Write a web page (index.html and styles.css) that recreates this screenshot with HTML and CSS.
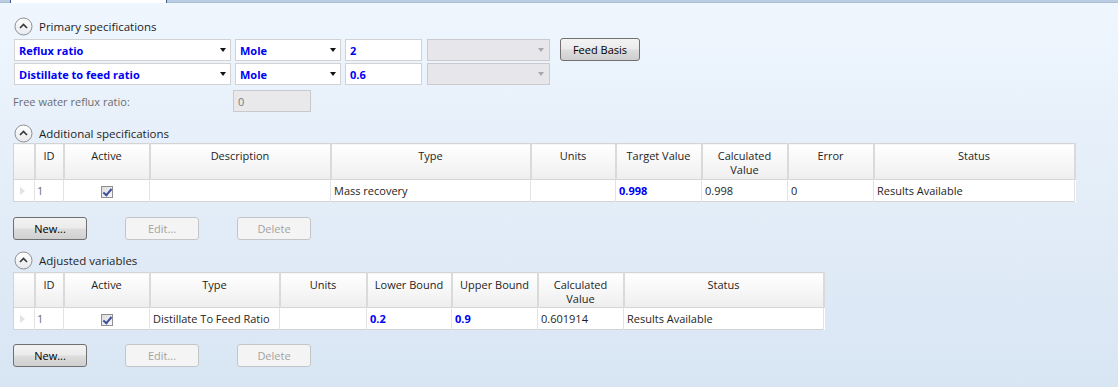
FILE: index.html
```html
<!DOCTYPE html>
<html>
<head>
    <title>Column Specifications</title>
    <link rel="stylesheet" href="styles.css">
</head>
<body>
    <div class="tabstrip"><div class="tab"></div></div>

    <div class="page">
        <div class="section-head head-primary">
            <svg class="collapse" width="19" height="19" viewBox="0 0 19 19">
                <defs>
                    <linearGradient id="cg" x1="0" y1="0" x2="0" y2="1">
                        <stop offset="0" stop-color="#ffffff"/>
                        <stop offset="1" stop-color="#e6e9ee"/>
                    </linearGradient>
                </defs>
                <circle cx="9.5" cy="9.5" r="8.5" fill="url(#cg)" stroke="#8e8e8e"/>
                <path d="M6 11 L9.5 7.5 L13 11" fill="none" stroke="#3a3a3a" stroke-width="1.7"/>
            </svg>
            <span>Primary specifications</span>
        </div>

        <div class="spec-row">
            <div class="combo combo-spec bold-blue">Reflux ratio<i class="arrow"></i></div>
            <div class="combo combo-basis bold-blue">Mole<i class="arrow"></i></div>
            <div class="field bold-blue">2</div>
            <div class="combo combo-off"><i class="arrow arrow-off"></i></div>
            <button class="btn btn-feed">Feed Basis</button>
        </div>
        <div class="spec-row">
            <div class="combo combo-spec bold-blue">Distillate to feed ratio<i class="arrow"></i></div>
            <div class="combo combo-basis bold-blue">Mole<i class="arrow"></i></div>
            <div class="field bold-blue">0.6</div>
            <div class="combo combo-off"><i class="arrow arrow-off"></i></div>
        </div>

        <div class="water-row">
            <span class="label-off">Free water reflux ratio:</span>
            <div class="field field-off">0</div>
        </div>

        <div class="section-head head-add">
            <svg class="collapse" width="19" height="19" viewBox="0 0 19 19">
                <circle cx="9.5" cy="9.5" r="8.5" fill="url(#cg)" stroke="#8e8e8e"/>
                <path d="M6 11 L9.5 7.5 L13 11" fill="none" stroke="#3a3a3a" stroke-width="1.7"/>
            </svg>
            <span>Additional specifications</span>
        </div>

        <table class="grid grid-add">
            <colgroup>
                <col class="c-rh"><col class="c-id"><col class="c-86">
                <col class="c-desc"><col class="c-type1"><col class="c-85">
                <col class="c-86"><col class="c-86"><col class="c-86"><col class="c-status1">
            </colgroup>
            <thead>
                <tr class="h36">
                    <th></th><th>ID</th><th>Active</th><th>Description</th><th>Type</th>
                    <th>Units</th><th>Target Value</th><th>Calculated Value</th><th>Error</th><th>Status</th>
                </tr>
            </thead>
            <tbody>
                <tr>
                    <td class="rh"><i class="row-mark"></i></td>
                    <td class="id">1</td>
                    <td class="center"><span class="check"></span></td>
                    <td></td>
                    <td>Mass recovery</td>
                    <td></td>
                    <td class="bold-blue">0.998</td>
                    <td>0.998</td>
                    <td>0</td>
                    <td>Results Available</td>
                </tr>
            </tbody>
        </table>

        <div class="btn-row">
            <button class="btn">New...</button>
            <button class="btn" disabled>Edit...</button>
            <button class="btn" disabled>Delete</button>
        </div>

        <div class="section-head head-adj">
            <svg class="collapse" width="19" height="19" viewBox="0 0 19 19">
                <circle cx="9.5" cy="9.5" r="8.5" fill="url(#cg)" stroke="#8e8e8e"/>
                <path d="M6 11 L9.5 7.5 L13 11" fill="none" stroke="#3a3a3a" stroke-width="1.7"/>
            </svg>
            <span>Adjusted variables</span>
        </div>

        <table class="grid grid-adj">
            <colgroup>
                <col class="c-rh"><col class="c-id"><col class="c-86">
                <col class="c-type2"><col class="c-87"><col class="c-85">
                <col class="c-86"><col class="c-86"><col class="c-status2">
            </colgroup>
            <thead>
                <tr class="h35">
                    <th></th><th>ID</th><th>Active</th><th>Type</th><th>Units</th>
                    <th>Lower Bound</th><th>Upper Bound</th><th>Calculated Value</th><th>Status</th>
                </tr>
            </thead>
            <tbody>
                <tr>
                    <td class="rh"><i class="row-mark"></i></td>
                    <td class="id">1</td>
                    <td class="center"><span class="check"></span></td>
                    <td>Distillate To Feed Ratio</td>
                    <td></td>
                    <td class="bold-blue">0.2</td>
                    <td class="bold-blue">0.9</td>
                    <td>0.601914</td>
                    <td>Results Available</td>
                </tr>
            </tbody>
        </table>

        <div class="btn-row btn-row-last">
            <button class="btn">New...</button>
            <button class="btn" disabled>Edit...</button>
            <button class="btn" disabled>Delete</button>
        </div>
    </div>
</body>
</html>
```

FILE: styles.css
```css
html, body {
    margin: 0;
    height: 100%;
}
body {
    font-family: "Open Sans", "Noto Sans", sans-serif;
    font-size: 11px;
    color: #1e1e1e;
    background: linear-gradient(#eff6fe, #d8e5f3);
    overflow: hidden;
}
.tabstrip {
    height: 2px;
    background: #bccde3;
    border-bottom: 1px solid #a9bdd7;
}
.tab {
    margin-left: 10px;
    width: 155px;
    height: 3px;
    background: #ffffff;
    border-left: 1px solid #3b5b8c;
    border-right: 1px solid #3b5b8c;
}
.page {
    padding-left: 13px;
}
.section-head {
    display: flex;
    align-items: center;
    gap: 6px;
    height: 19px;
    padding-left: 1px;
    font-size: 11.5px;
}
.head-primary { margin-top: 14px; }
.head-add { margin-top: 12px; }
.head-adj { margin-top: 11px; }
.collapse { flex: none; }

.bold-blue {
    color: #0000f5;
    font-weight: bold;
}

.spec-row {
    display: flex;
    align-items: center;
    margin-top: 3px;
    padding-left: 1px;
}
.spec-row + .spec-row { margin-top: 2px; }
.combo, .field {
    box-sizing: border-box;
    height: 22px;
    border: 1px solid #d2d2d2;
    background: #ffffff;
    display: flex;
    align-items: center;
    padding-left: 4px;
    margin-right: 4px;
    position: relative;
}
.combo-spec { width: 217px; }
.combo-basis { width: 106px; }
.field { width: 77px; margin-right: 5px; }
.combo-off {
    width: 123px;
    background: #e7e7eb;
    border-color: #cbcbcf;
    margin-right: 10px;
}
.arrow {
    position: absolute;
    right: 4px;
    top: 8px;
    width: 0;
    height: 0;
    border-left: 3.5px solid transparent;
    border-right: 3.5px solid transparent;
    border-top: 4px solid #111111;
}
.arrow-off { border-top-color: #a9a9ad; right: 5px; }

.btn {
    box-sizing: border-box;
    width: 74px;
    height: 23px;
    font-family: inherit;
    font-size: 11px;
    color: #000000;
    border: 1px solid #707070;
    border-radius: 3px;
    background: linear-gradient(#f3f3f3 0%, #ebebeb 48%, #dddddd 52%, #cfcfcf 100%);
    padding: 0;
}
.btn:disabled {
    color: #a3a3a3;
    border-color: #c3c6c9;
    background: #f4f4f4;
}
.btn-feed {
    width: 80px;
    margin-top: -1px;
}

.water-row {
    display: flex;
    align-items: center;
    margin-top: 5px;
}
.label-off {
    color: #6d6d6d;
    width: 220px;
}
.field-off {
    width: 78px;
    background: #e9e9ec;
    border-color: #c9c9cc;
    color: #7a7a7a;
}

.grid {
    border-collapse: collapse;
    table-layout: fixed;
    background: #ffffff;
    border: 1px solid #d3d3d3;
}
.grid-add { width: 1061px; }
.grid-adj { width: 810px; margin-top: 2px; }
.c-rh { width: 21px; }
.c-id { width: 29px; }
.c-85 { width: 85px; }
.c-86 { width: 86px; }
.c-87 { width: 87px; }
.c-desc { width: 181px; }
.c-type1 { width: 200px; }
.c-status1 { width: 201px; }
.c-type2 { width: 130px; }
.c-status2 { width: 200px; }

.grid th {
    font-weight: normal;
    vertical-align: top;
    text-align: center;
    line-height: 14px;
    padding: 5px 2px 0;
    background: linear-gradient(#ffffff, #f5f5f5 60%, #eeeeee);
    border-right: 2px solid #dadada;
    border-bottom: 1px solid #d5d5d5;
}
.grid .h36 { height: 36px; }
.grid .h35 { height: 35px; }
.grid td {
    height: 21px;
    padding: 0 3px;
    border-right: 1px solid #e3e3e3;
    white-space: nowrap;
    overflow: hidden;
}
.grid td.id { color: #6a6a6a; padding-left: 2px; }
.grid td.center { text-align: center; }
.grid td.rh { padding: 0; }
.row-mark {
    display: block;
    margin-left: 6px;
    width: 0;
    height: 0;
    border-top: 4px solid transparent;
    border-bottom: 4px solid transparent;
    border-left: 5px solid #e2e2e2;
}
.check {
    display: inline-block;
    box-sizing: border-box;
    width: 12px;
    height: 12px;
    vertical-align: middle;
    border: 1px solid #8f8f8f;
    background: linear-gradient(135deg, #dcdcdc, #fafafa);
    position: relative;
}
.check::after {
    content: "";
    position: absolute;
    left: 3px;
    top: 0px;
    width: 3px;
    height: 7px;
    border-right: 2px solid #3d4f9e;
    border-bottom: 2px solid #3d4f9e;
    transform: rotate(40deg);
}

.btn-row {
    display: flex;
    gap: 38px;
    margin-top: 15px;
}
.btn-row-last { margin-top: 14px; }
```
